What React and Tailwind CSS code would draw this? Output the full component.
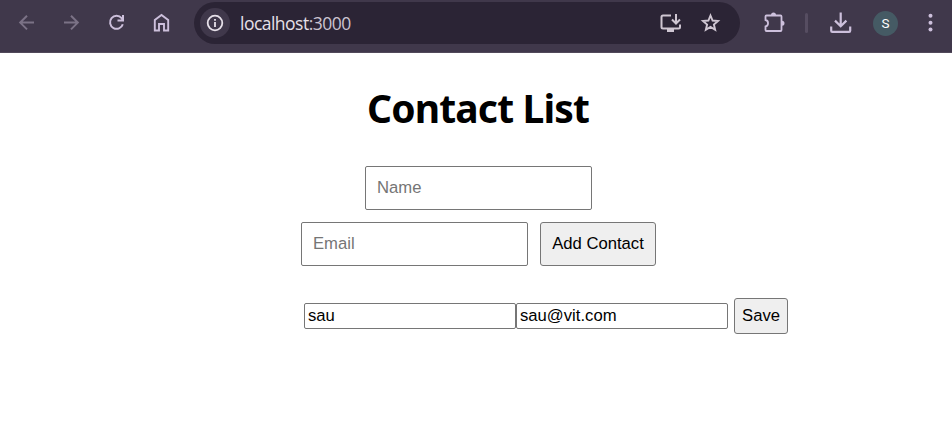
import React from 'react';

function Icon({ className = '', children }) {
  return (
    <svg width="24" height="24" viewBox="0 0 24 24" fill="none" stroke="currentColor" strokeWidth="2" className={`block shrink-0 ${className}`}>
      {children}
    </svg>
  );
}

function AddressBar() {
  return (
    <div className="ml-5 flex h-[42px] w-[546px] shrink-0 items-center rounded-full bg-[#2b2435] pl-1.5 text-[#cfc6d2]">
      <div className="flex size-[30px] shrink-0 items-center justify-center rounded-full bg-[#40384b] text-[#e6e0e9]">
        <svg width="18" height="18" viewBox="0 0 18 18" fill="none" stroke="currentColor" strokeWidth="1.8">
          <circle cx="9" cy="9" r="7.3" />
          <path d="M9 8v5M9 5v1.8" />
        </svg>
      </div>
      <div className="ml-[10px] w-[419px] whitespace-nowrap font-['Open_Sans','Noto_Sans',sans-serif] text-[17.5px] leading-6 tracking-[-0.52px] text-[#e6e0e9]">
        localhost<span className="text-[#cbc3d0]">:3000</span>
      </div>
      <Icon>
        <path d="M12 4.5H4Q2.500 4.500 2.500 6v10q0 1.500 1.500 1.500h15.500q1.500 0 1.500-1.500v-2.500" />
        <path d="M8 18h7v3H8z" fill="currentColor" stroke="none" />
        <path d="M17 3v9M13 8.500l4 4 4-4" />
      </Icon>
      <Icon className="ml-4">
        <path strokeWidth="1.900" d="M11.500 4.500l2.100 5 5.400.45-4.100 3.550 1.250 5.250-4.650-2.800-4.650 2.800 1.250-5.250L4 9.950l5.400-.45z" />
      </Icon>
    </div>
  );
}

function BrowserToolbar() {
  return (
    <header className="flex h-[53px] items-start border-b border-[#51495a] bg-[#40384b] pt-0.5">
      <div className="flex h-[42px] items-center text-[#cdc0dc]">
        <Icon className="ml-[15px] text-[#7b7286]">
          <path d="M19 11.600H5.500M12 4.800l-6.800 6.800 6.800 6.800" />
        </Icon>
        <Icon className="ml-5 text-[#7b7286]">
          <path d="M5 11.600h13.500M12 4.800l6.800 6.800-6.800 6.800" />
        </Icon>
        <Icon className="ml-[21px]">
          <path d="M18.800 13.200A6.500 6.500 0 1 1 17.600 7.200L19 9M19 4v5.500h-5.500" />
        </Icon>
        <Icon className="ml-[22px]">
          <path d="M4.800 19.500V9l6.700-5 6.700 5v10.500h-4.200V13H9v6.500z" strokeWidth="1.900" />
        </Icon>
        <AddressBar />
        <Icon className="ml-[23px]">
          <path d="M3.500 4.500h14q1 0 1 1v13.500q0 1-1 1h-14q-1 0-1-1v-3.500c3.400-.6 3.400-5.900 0-6.500V5.500q0-1 1-1z" strokeWidth="1.800" />
          <path d="M8 4a2.500 2.500 0 0 1 5 0zM19 9.800a2.500 2.500 0 0 1 0 5z" fill="currentColor" stroke="none" />
        </Icon>
        <div className="ml-[18px] h-5 w-[3px] rounded-full bg-[#564d61]" />
        <Icon className="ml-[21px]">
          <path strokeWidth="2.200" d="M11.700 1.500V15M6 9.600l5.700 5.600 5.700-5.600M2.200 15.500v4.200q0 1.100 1.100 1.100h16.800q1.100 0 1.100-1.100v-4.200" />
        </Icon>
        <div className="ml-5 flex size-[25px] items-center justify-center rounded-full bg-[#455a64] font-[Roboto,sans-serif] text-[13.5px] text-white">
          S
        </div>
        <Icon className="ml-5">
          <g fill="currentColor" stroke="none">
            <circle cx="12.500" cy="4.700" r="2" />
            <circle cx="12.500" cy="11.700" r="2" />
            <circle cx="12.500" cy="18.600" r="2" />
          </g>
        </Icon>
      </div>
    </header>
  );
}

const control = "block rounded-[2px] border border-[#767676] font-['Liberation_Sans',Arial,sans-serif] text-[16.67px] leading-5 outline-none";

export default function App() {
  return (
    <div className="h-[423px] w-[952px] overflow-hidden bg-white text-black">
      <BrowserToolbar />
      <main className="flex flex-col items-start">
        <h1 className="ml-[367px] mt-[30px] whitespace-nowrap font-['Noto_Sans','Open_Sans',sans-serif] text-[39px] font-bold leading-[50px] tracking-[-0.84px]">
          Contact List
        </h1>
        <input placeholder="Name" className={`${control} ml-[365px] mt-[33px] h-11 w-[227px] px-[11px] placeholder:text-[#757575]`} />
        <div className="ml-[301px] mt-3 flex gap-3">
          <input placeholder="Email" className={`${control} h-11 w-[227px] px-[11px] placeholder:text-[#757575]`} />
          <button className={`${control} h-11 w-[116px] whitespace-nowrap rounded-[3px] bg-[#efefef]`}>Add Contact</button>
        </div>
        <div className="ml-[304px] mt-8 flex items-center">
          <input defaultValue="sau" className={`${control} h-[26px] w-[212px] px-[3px]`} />
          <input defaultValue="sau@vit.com" className={`${control} h-[26px] w-[212px] px-[3px]`} />
          <button className={`${control} ml-1.5 h-9 w-[54px] rounded-[3px] bg-[#efefef]`}>Save</button>
        </div>
      </main>
    </div>
  );
}
